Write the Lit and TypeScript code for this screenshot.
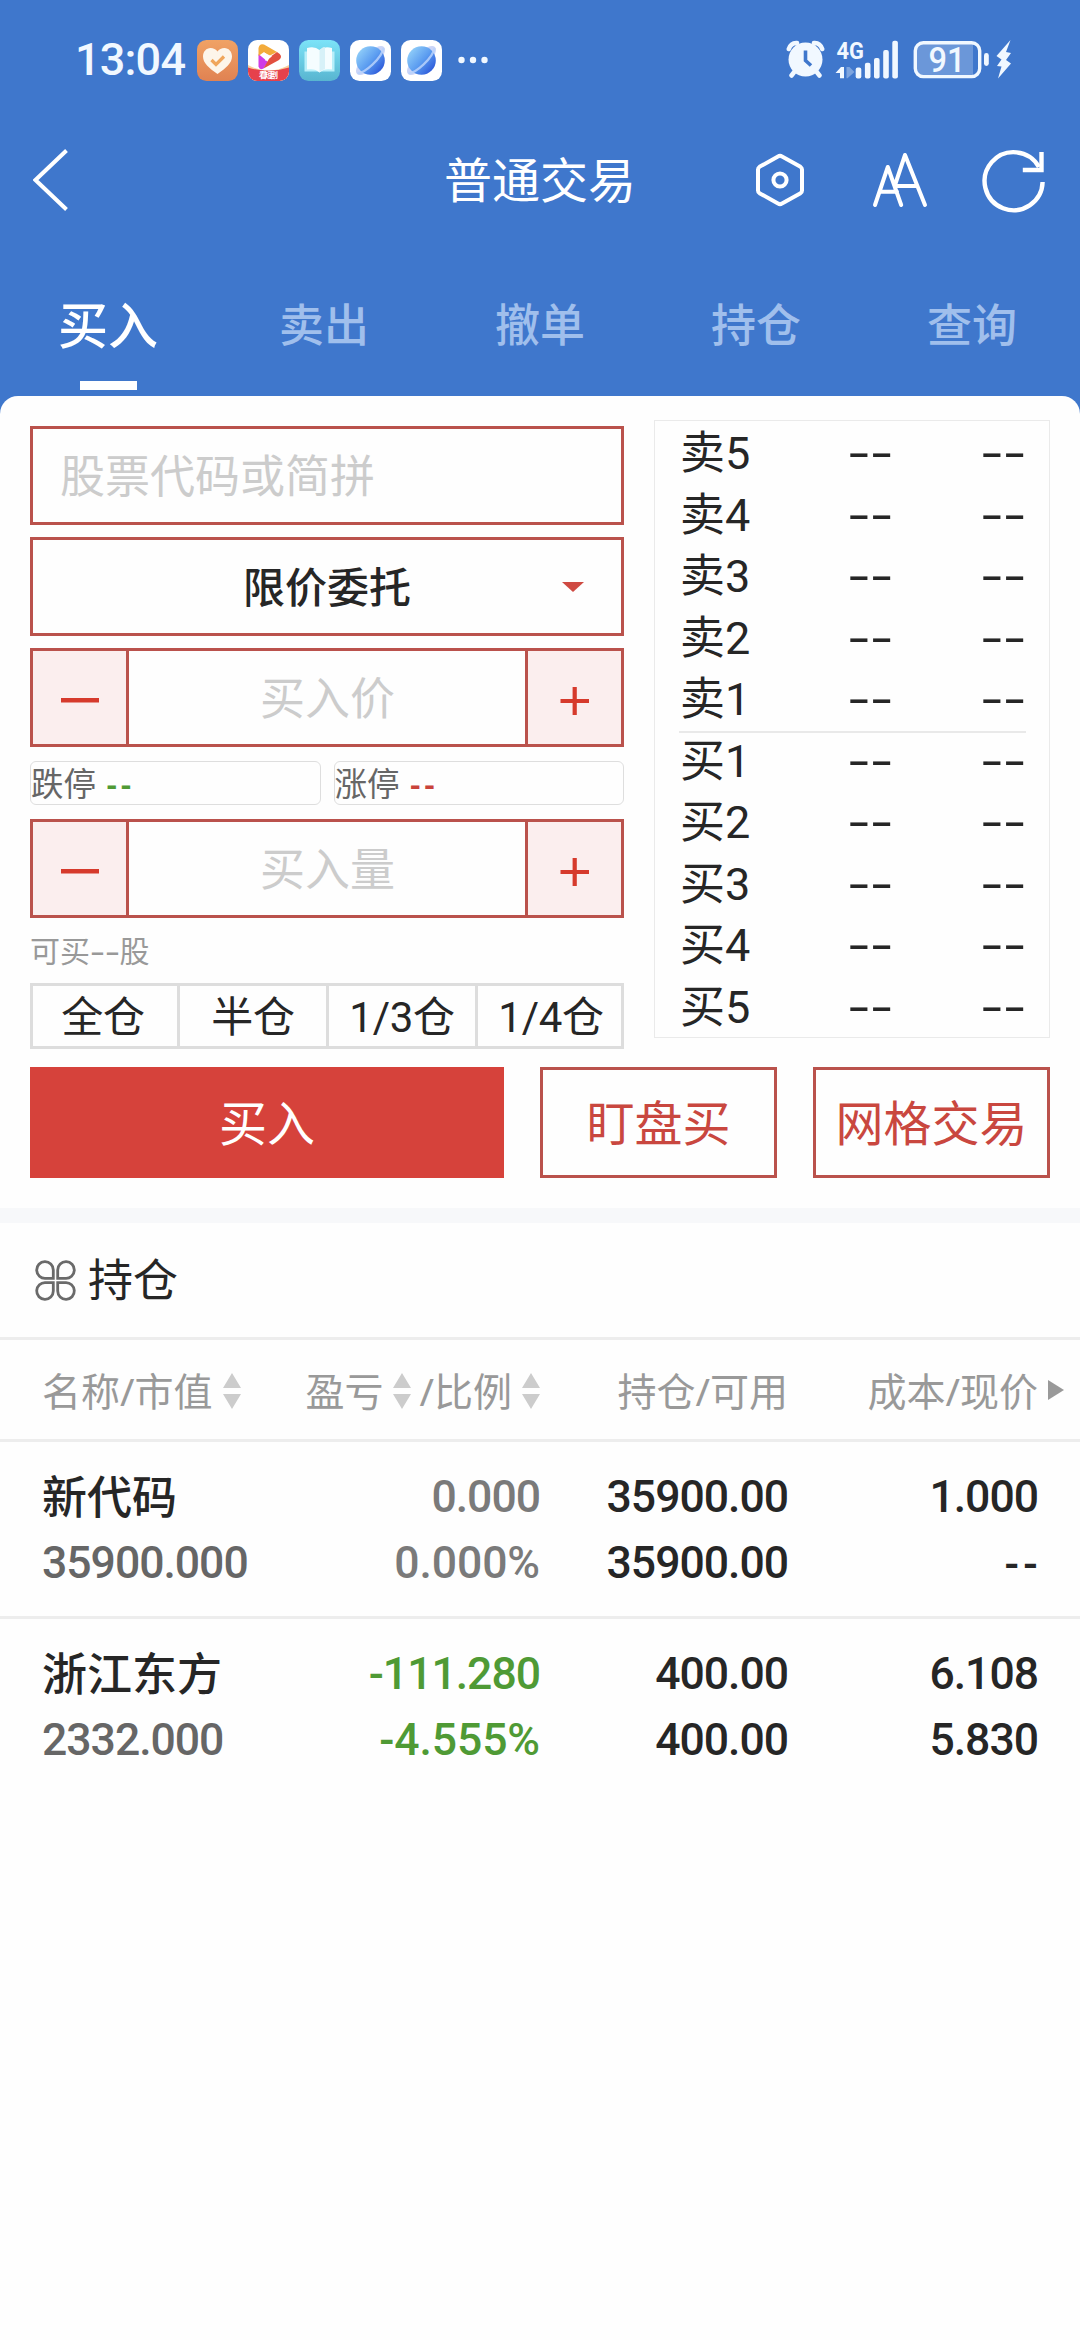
import { LitElement, html, css, svg } from "lit";
import { customElement, property } from "lit/decorators.js";
import { classMap } from "lit/directives/class-map.js";

const FONT = css`"Noto Sans", "Noto Sans CJK SC", sans-serif`;
const NUM = css`Roboto, "Noto Sans CJK SC", sans-serif`;

const dashes = html`<span class="dash">--</span>`;

/* ---------- status bar ---------- */

@customElement("status-bar")
class StatusBar extends LitElement {
  static styles = css`
    :host {
      display: flex;
      align-items: center;
      height: 120px;
      box-sizing: border-box;
      padding: 0 68px 0 75px;
      color: #f1f8ff;
      font-family: ${NUM};
    }
    .time {
      width: 122px;
      font-size: 45px;
      font-weight: 500;
      line-height: 60px;
      letter-spacing: -0.8px;
      white-space: nowrap;
    }
    .apps {
      display: flex;
      gap: 10px;
      align-items: center;
    }
    .apps svg,
    .right svg {
      display: block;
    }
    .dots {
      margin-left: 5px;
    }
    .right {
      margin-left: auto;
    }
    .tiny {
      font: 700 8px "Noto Sans CJK SC", sans-serif;
    }
    .net {
      font: 700 24.5px Roboto, sans-serif;
    }
    .level {
      font: 500 35.5px Roboto, sans-serif;
    }
  `;

  private planet(id: string) {
    return html`<svg width="41" height="41" viewBox="0 0 41 41">
      <defs>
        <linearGradient id=${id} x1="0.1" y1="0.2" x2="0.9" y2="0.9">
          <stop offset="0" stop-color="#8ccaf8" />
          <stop offset="0.5" stop-color="#5a9bf0" />
          <stop offset="1" stop-color="#2a55d8" />
        </linearGradient>
      </defs>
      <rect width="41" height="41" rx="9.5" fill="#fff" />
      <ellipse cx="20.5" cy="20.5" rx="19" ry="7.5" transform="rotate(-45 20.5 20.5)" fill="#cbd5f7" />
      <circle cx="20.5" cy="20.5" r="14.3" fill="url(#${id})" />
      <path d="M7.5 33C14 34 32 18 33.5 8" fill="none" stroke="#b9d2fb" stroke-width="2.2" opacity="0.85" />
    </svg>`;
  }

  render() {
    return html`
      <div class="time">13:04</div>
      <div class="apps">
        <svg width="41" height="41" viewBox="0 0 41 41">
          <defs>
            <linearGradient id="o" x1="0" y1="0" x2="0" y2="1">
              <stop offset="0" stop-color="#f0a265" />
              <stop offset="1" stop-color="#e08252" />
            </linearGradient>
          </defs>
          <rect width="41" height="41" rx="9.5" fill="url(#o)" />
          <path d="M20.5 34C12 28 6 23 6 16.5C6 11.5 9.5 8 13.5 8C16.5 8 19 9.5 20.5 11.5C22 9.5 24.5 8 27.5 8C31.5 8 35 11.5 35 16.5C35 23 29 28 20.5 34Z" fill="#fdf5ea" />
          <path d="M14.5 20L19 24.5L27 16.5" fill="none" stroke="#f0a65c" stroke-width="3.2" />
        </svg>
        <svg width="41" height="41" viewBox="0 0 41 41">
          <defs>
            <clipPath id="c"><rect width="41" height="41" rx="9.5" /></clipPath>
          </defs>
          <g clip-path="url(#c)">
            <rect width="41" height="41" fill="#fff" />
            <path d="M0 25Q20.5 36 41 25V41H0Z" fill="#f9cf9a" />
            <path d="M0 27.5Q20.5 34 41 27.5V41H0Z" fill="#e6414c" />
            <path d="M10.5 14V26.5Q11.5 30.5 15.5 28.5L20 22Z" fill="#cf3be6" />
            <path d="M10.5 16V8Q11.5 3 16 4.5L29 12L21 16L16 12Z" fill="#f3ab3b" />
            <path d="M29 12Q36 16 31 20L15.5 28.5L22 17Z" fill="#e2503f" />
            <path d="M17 13L24 16.5L17.5 21Z" fill="#fff" />
            <text class="tiny" x="20.5" y="38" text-anchor="middle" textLength="19" fill="#fff">看短剧</text>
          </g>
        </svg>
        <svg width="41" height="41" viewBox="0 0 41 41">
          <defs>
            <linearGradient id="b" x1="0" y1="0" x2="0" y2="1">
              <stop offset="0" stop-color="#7ce3f8" />
              <stop offset="1" stop-color="#58b5d0" />
            </linearGradient>
          </defs>
          <rect width="41" height="41" rx="9.5" fill="url(#b)" />
          <path d="M5.5 11.5H35.5V31.5H5.5Z" fill="#b8effa" />
          <path d="M8 8Q16 6 20.5 10Q25 6 33 8V29.5Q25 28 20.5 32.5Q16 28 8 29.5Z" fill="#f5fdff" />
          <path d="M20.5 10Q25 6 26 7.5V29Q22 30 20.5 32.5Z" fill="#d7f1f8" />
        </svg>
        ${this.planet("p1")} ${this.planet("p2")}
        <svg class="dots" width="34" height="8" viewBox="0 0 34 8">
          <g fill="#f1f8ff">
            <circle cx="4.5" cy="4" r="3.2" /><circle cx="16" cy="4" r="3.2" /><circle cx="27.5" cy="4" r="3.2" />
          </g>
        </svg>
      </div>
      <div class="right">
        <svg width="226" height="60" viewBox="786 30 226 60" fill="#f1f8ff">
          <circle cx="805.5" cy="59.5" r="17" />
          <path d="M788.8 49Q791 42.5 797 43M822.2 49Q820 42.5 814 43M795 71L791.5 75.5M816 71L819.5 75.5" fill="none" stroke="#f1f8ff" stroke-width="4.5" stroke-linecap="round" />
          <path d="M805.5 50.5V60.5L811 65.5" fill="none" stroke="#3f77cc" stroke-width="3.6" />
          <text class="net" x="836.5" y="59" textLength="27.500" lengthAdjust="spacingAndGlyphs">4G</text>
          <path d="M835.5 73L841 67H844V78.3H840V73Z" />
          <path d="M846.5 67H849.5L854.5 72L847.5 78.3H846.5Z" opacity="0.35" />
          <rect x="855.7" y="67.5" width="5.6" height="11" rx="2" />
          <rect x="864.9" y="62.7" width="5.6" height="15.8" rx="2" />
          <rect x="874" y="58" width="5.6" height="20.5" rx="2" />
          <rect x="883.2" y="50" width="5.6" height="28.5" rx="2" />
          <rect x="892.3" y="40.7" width="5.6" height="37.8" rx="2" />
          <path d="M923 42.8H973V76.6H923Q915.3 76.6 915.3 69V50.5Q915.3 42.8 923 42.8Z" opacity="0.25" />
          <rect x="915.3" y="42.8" width="64.4" height="33.8" rx="8" fill="none" stroke="#f1f8ff" stroke-width="3.4" />
          <text class="level" x="928.5" y="72" textLength="37" lengthAdjust="spacingAndGlyphs">91</text>
          <rect x="984" y="53" width="4.8" height="13" rx="2.4" />
          <path d="M1010.5 40L996.5 56L1001.5 59.5L997 66L1001.5 66.5L998 78.5L1011 63.5L1006 60L1011 53L1006 52Z" />
        </svg>
      </div>
    `;
  }
}

/* ---------- navigation bar and tabs ---------- */

@customElement("nav-header")
class NavHeader extends LitElement {
  @property({ type: Array }) tabs: string[] = [];
  @property({ type: Number }) active = 0;

  static styles = css`
    :host {
      display: block;
      font-family: ${FONT};
      color: #fff;
    }
    .bar {
      display: grid;
      grid-template-columns: 1fr auto 1fr;
      align-items: center;
      height: 120px;
      padding: 0 33px;
    }
    svg {
      display: block;
      fill: none;
      stroke: #fff;
    }
    .title {
      font-size: 48px;
      line-height: 60px;
    }
    .actions {
      display: flex;
      align-items: center;
      justify-content: flex-end;
    }
    .tabs {
      display: grid;
      grid-template-columns: repeat(5, 1fr);
      height: 156px;
    }
    .tab {
      display: flex;
      flex-direction: column;
      align-items: center;
      padding-top: 60px;
      font-size: 45px;
      font-weight: 500;
      line-height: 50px;
      color: #a0bfec;
    }
    .tab.on {
      font-size: 50px;
      color: #fff;
    }
    .mark {
      width: 57px;
      height: 9px;
      margin-top: 31px;
      background: #fff;
    }
  `;

  render() {
    return html`
      <div class="bar">
        <svg width="36" height="62" viewBox="0 0 36 62" stroke-width="4">
          <path d="M33.5 1.5L2.5 31L33.5 60.5" />
        </svg>
        <div class="title">普通交易</div>
        <div class="actions">
          <svg width="292" height="82" viewBox="755 139 292 82" stroke-width="4" stroke-linejoin="round" stroke-linecap="round">
            <path d="M778 156.6Q780 155 782 156.6L800.5 166.8Q802 167.8 802 169.5V190.5Q802 192.2 800.5 193.2L782 203.4Q780 205 778 203.4L759.5 193.2Q758 192.2 758 190.5V169.5Q758 167.8 759.5 166.8Z" />
            <circle cx="780" cy="180" r="6.6" />
            <path d="M875 205L887.8 167L901.2 205M879.5 191.7H897M894.7 186L905 155L925 205M896.5 186H917.5" />
            <g stroke-linecap="butt" stroke-linejoin="miter" stroke-width="4.4">
              <path d="M1042.6 182A29 29 0 1 1 1038.9 167" />
              <path d="M1022.8 170H1041.5V152" />
            </g>
          </svg>
        </div>
      </div>
      <div class="tabs">
        ${this.tabs.map(
          (t, i) => html`<div class=${classMap({ tab: true, on: i === this.active })}>
            ${t}${i === this.active ? html`<i class="mark"></i>` : ""}
          </div>`
        )}
      </div>
    `;
  }
}

/* ---------- order form ---------- */

@customElement("order-form")
class OrderForm extends LitElement {
  static styles = css`
    :host {
      display: flex;
      flex-direction: column;
      padding-top: 6px;
      font-family: ${FONT};
    }
    .field {
      display: flex;
      align-items: center;
      box-sizing: border-box;
      height: 99px;
      border: 3px solid #ba524c;
      font-size: 45px;
      line-height: 60px;
      color: #ccc;
    }
    .field + .field {
      margin-top: 12px;
    }
    .code {
      padding-left: 27px;
    }
    .select {
      padding: 0 37px 0 59px;
      font-size: 42px;
      font-weight: 500;
      color: #262626;
    }
    .label {
      flex: 1;
      text-align: center;
    }
    svg {
      display: block;
    }
    .step {
      display: flex;
      align-items: center;
      justify-content: center;
      flex: none;
      width: 96px;
      height: 93px;
      padding-top: 6px;
      box-sizing: border-box;
      background: #fbeeee;
    }
    .minus {
      border-right: 3px solid #ba524c;
    }
    .plus {
      border-left: 3px solid #ba524c;
    }
    .value {
      flex: 1;
      text-align: center;
      padding-left: 1px;
    }
    .limits {
      display: grid;
      grid-template-columns: 1fr 1fr;
      gap: 13px;
      margin: 14px 0;
    }
    .limit {
      box-sizing: border-box;
      height: 44px;
      border: 1px solid #dedede;
      border-radius: 6px;
      font-size: 32.5px;
      line-height: 43px;
      color: #666;
      white-space: pre;
    }
    .dash {
      font-weight: 600;
      letter-spacing: 4px;
      margin-left: 2px;
    }
    .down {
      color: #4f9a35;
    }
    .up {
      color: #c9433b;
    }
    .hint {
      display: flex;
      height: 65px;
      font-size: 30px;
      line-height: 65px;
      color: #999;
    }
    .wide {
      width: 29.6px;
      transform: scaleX(1.55);
      transform-origin: 0 50%;
    }
    .quick {
      display: grid;
      grid-template-columns: 144px 149px 149px 146px;
      box-sizing: border-box;
      height: 66px;
      border: 3px solid #ddd;
      font-family: ${NUM};
      font-size: 42px;
      line-height: 63px;
      letter-spacing: -0.3px;
      color: #262626;
      text-align: center;
    }
    .quick span:first-child {
      padding-right: 4px;
    }
    .quick span:last-child {
      padding-left: 3px;
    }
    .quick span + span {
      border-left: 3px solid #ddd;
    }
  `;

  private stepper(label: string) {
    return html`<div class="field">
      <span class="step minus">
        <svg width="38" height="5"><rect width="38" height="4.5" fill="#d63a2c" /></svg>
      </span>
      <span class="value">${label}</span>
      <span class="step plus">
        <svg width="30" height="30" viewBox="0 0 30 30">
          <path d="M0.5 15H29M14.7 1V29" stroke="#d63a2c" stroke-width="4.2" />
        </svg>
      </span>
    </div>`;
  }

  render() {
    return html`
      <div class="field code">股票代码或简拼</div>
      <div class="field select">
        <span class="label">限价委托</span>
        <svg width="22" height="10"><path d="M0 0H22L11 10Z" fill="#cf4a42" /></svg>
      </div>
      ${this.stepper("买入价")}
      <div class="limits">
        <div class="limit">跌停 <span class="dash down">--</span></div>
        <div class="limit">涨停 <span class="dash up">--</span></div>
      </div>
      ${this.stepper("买入量")}
      <div class="hint"><span>可买</span><span class="wide">--</span><span>股</span></div>
      <div class="quick">
        ${["全仓", "半仓", "1/3仓", "1/4仓"].map((q) => html`<span>${q}</span>`)}
      </div>
    `;
  }
}

/* ---------- five-level quote book ---------- */

@customElement("quote-book")
class QuoteBook extends LitElement {
  static styles = css`
    :host {
      display: flex;
      flex-direction: column;
      box-sizing: border-box;
      height: 618px;
      border: 1px solid #eaeaea;
      padding: 2px 23px 0 24px;
      font-family: ${NUM};
      font-size: 45px;
      color: #262626;
    }
    .row {
      display: grid;
      grid-template-columns: 79px 135px 133px;
      flex: none;
      height: 61.5px;
      line-height: 61.5px;
    }
    .split {
      flex: none;
      height: 2px;
      margin: 0 0 -2px;
      background: #e9e9e9;
    }
    .label {
      padding-left: 1px;
      white-space: nowrap;
    }
    .v {
      text-align: right;
    }
    .dash {
      display: inline-block;
      font-family: "Noto Sans", sans-serif;
      line-height: 45px;
      transform: translateY(-2.5px) scaleX(1.57);
      transform-origin: 100% 50%;
    }
  `;

  private row(label: string) {
    return html`<div class="row">
      <span class="label">${label}</span>
      <span class="v">${dashes}</span>
      <span class="v">${dashes}</span>
    </div>`;
  }

  render() {
    return html`
      ${[5, 4, 3, 2, 1].map((n) => this.row("卖" + n))}
      <div class="split"></div>
      ${[1, 2, 3, 4, 5].map((n) => this.row("买" + n))}
    `;
  }
}

/* ---------- holdings ---------- */

interface Holding {
  name: string;
  value: string;
  profit: string;
  ratio: string;
  amount: string;
  usable: string;
  cost: string;
  price: string;
  tone: "flat" | "down";
}

@customElement("holdings-table")
class HoldingsTable extends LitElement {
  @property({ type: Array }) rows: Holding[] = [];

  static styles = css`
    :host {
      display: block;
      border-top: 15px solid #f7f8fa;
      font-family: ${FONT};
      color: #262626;
    }
    svg {
      display: block;
      flex: none;
    }
    .title {
      display: flex;
      align-items: center;
      gap: 12px;
      height: 114px;
      padding-left: 35px;
      border-bottom: 3px solid #ededed;
      font-size: 45px;
      line-height: 60px;
    }
    .grid {
      display: grid;
      grid-template-columns: 258px 240px 248px 250px 42px;
      padding-left: 42px;
    }
    .head {
      align-items: center;
      height: 99px;
      border-bottom: 3px solid #ededed;
      font-size: 39px;
      line-height: 60px;
      color: #999;
      white-space: nowrap;
    }
    .cell {
      display: flex;
      align-items: center;
      padding-top: 2px;
    }
    .end {
      justify-content: flex-end;
    }
    .sort {
      margin-left: 10px;
    }
    .mid {
      margin-right: 8px;
    }
    .more {
      margin-left: 10px;
    }
    .item {
      padding-top: 22px;
      padding-bottom: 20px;
    }
    .item + .item {
      border-top: 3px solid #ededed;
    }
    .col {
      display: flex;
      flex-direction: column;
      font-family: ${NUM};
      font-size: 44.5px;
      font-weight: 500;
      line-height: 66px;
      letter-spacing: -1px;
      text-align: right;
      white-space: nowrap;
    }
    .first {
      text-align: left;
    }
    .name {
      font-family: ${FONT};
      font-size: 45px;
      letter-spacing: 0;
    }
    .value {
      color: #666;
    }
    .ratio {
      letter-spacing: -0.1px;
    }
    .flat {
      color: #7a7a7a;
    }
    .down {
      color: #4f9a35;
    }
    .dash {
      font-family: "Noto Sans", sans-serif;
      line-height: 45px;
      letter-spacing: 4.5px;
      margin-right: -4px;
    }
  `;

  private sort(mid = false) {
    return html`<svg class=${classMap({ sort: true, mid })} width="18" height="36" viewBox="0 0 18 36">
      ${svg`<path d="M0 15L9 0L18 15ZM0 21H18L9 36Z" fill="#ccc" />`}
    </svg>`;
  }

  render() {
    return html`
      <div class="title">
        <svg width="41" height="41" viewBox="0 0 41 41" fill="none" stroke="#6a6a6a" stroke-width="2.8">
          <path d="M18.3 18.3H10.5A8.3 8.3 0 1 1 18.3 10Z" />
          <path d="M22.7 18.3H30.5A8.3 8.3 0 1 0 22.7 10Z" />
          <path d="M18.3 22.7H10.5A8.3 8.3 0 1 0 18.3 31Z" />
          <path d="M22.7 22.7H30.5A8.3 8.3 0 1 1 22.7 31Z" />
        </svg>
        <span>持仓</span>
      </div>
      <div class="grid head">
        <span class="cell">名称/市值${this.sort()}</span>
        <span class="cell end">盈亏${this.sort(true)}/比例${this.sort()}</span>
        <span class="cell end">持仓/可用</span>
        <span class="cell end">成本/现价</span>
        <svg class="more" width="16" height="20"><path d="M0 0L16 10L0 20Z" fill="#999" /></svg>
      </div>
      ${this.rows.map(
        (r) => html`<div class="grid item">
          <div class="col first">
            <span class="name">${r.name}</span>
            <span class="value">${r.value}</span>
          </div>
          <div class="col ${r.tone}"><span>${r.profit}</span><span class="ratio">${r.ratio}</span></div>
          <div class="col"><span>${r.amount}</span><span>${r.usable}</span></div>
          <div class="col">
            <span>${r.cost}</span>
            <span>${r.price === "--" ? dashes : r.price}</span>
          </div>
        </div>`
      )}
    `;
  }
}

/* ---------- page ---------- */

@customElement("app-root")
class AppRoot extends LitElement {
  static styles = css`
    :host {
      display: block;
      width: 1080px;
      min-height: 2340px;
      background: #fefefe;
      font-family: ${FONT};
    }
    .top {
      padding-bottom: 20px;
      background: #3f77cc;
    }
    .panel {
      position: relative;
      margin-top: -20px;
      padding: 24px 30px 30px;
      border-radius: 18px 18px 0 0;
      background: #fefefe;
    }
    .trade {
      display: grid;
      grid-template-columns: 594px 396px;
      gap: 30px;
      align-items: start;
    }
    .buttons {
      display: grid;
      grid-template-columns: 474px 237px 237px;
      gap: 36px;
      margin-top: 18px;
    }
    .btn {
      display: flex;
      align-items: center;
      justify-content: center;
      box-sizing: border-box;
      height: 111px;
      border: 3px solid #ba524c;
      font-size: 48px;
      line-height: 60px;
      color: #c9473f;
    }
    .main {
      border-color: #d6423b;
      background: #d6423b;
      color: #fff;
    }
  `;

  private rows: Holding[] = [
    { name: "新代码", value: "35900.000", profit: "0.000", ratio: "0.000%", amount: "35900.00", usable: "35900.00", cost: "1.000", price: "--", tone: "flat" },
    { name: "浙江东方", value: "2332.000", profit: "-111.280", ratio: "-4.555%", amount: "400.00", usable: "400.00", cost: "6.108", price: "5.830", tone: "down" },
  ];

  render() {
    return html`
      <div class="top">
        <status-bar></status-bar>
        <nav-header .tabs=${["买入", "卖出", "撤单", "持仓", "查询"]}></nav-header>
      </div>
      <div class="panel">
        <div class="trade">
          <order-form></order-form>
          <quote-book></quote-book>
        </div>
        <div class="buttons">
          <div class="btn main">买入</div>
          <div class="btn">盯盘买</div>
          <div class="btn">网格交易</div>
        </div>
      </div>
      <holdings-table .rows=${this.rows}></holdings-table>
    `;
  }
}
